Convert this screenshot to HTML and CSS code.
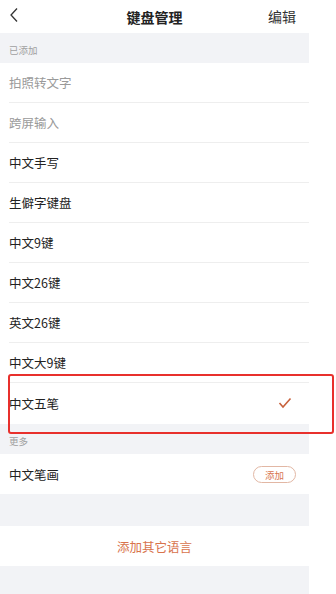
FILE: index.html
```html
<!DOCTYPE html>
<html>
<head>
<meta charset="utf-8">
<link rel="stylesheet" href="styles.css">
</head>
<body>
<div class="screen">
  <div class="header">
    <svg class="back" width="10" height="16" viewBox="0 0 10 16"><path d="M8 1.5 L2 8 L8 14.5" fill="none" stroke="#333" stroke-width="1.3"/></svg>
    <div class="title">键盘管理</div>
    <div class="edit">编辑</div>
  </div>
  <div class="section">已添加</div>
  <div class="list">
    <div class="row dim">拍照转文字</div>
    <div class="row dim">跨屏输入</div>
    <div class="row">中文手写</div>
    <div class="row">生僻字键盘</div>
    <div class="row">中文9键</div>
    <div class="row">中文26键</div>
    <div class="row">英文26键</div>
    <div class="row">中文大9键</div>
    <div class="row last sel">中文五笔
      <svg class="check" width="14" height="12" viewBox="0 0 14 12"><path d="M1.5 6 L5 10 L12.5 1.5" fill="none" stroke="#c8623c" stroke-width="1.6"/></svg>
    </div>
  </div>
  <div class="section">更多</div>
  <div class="list">
    <div class="row last">中文笔画<span class="add">添加</span></div>
  </div>
  <div class="gap"></div>
  <div class="more">添加其它语言</div>
  <div class="gap tail"></div>
</div>
<div class="highlight"></div>
</body>
</html>
```
FILE: styles.css
```css
html, body { margin: 0; padding: 0; background: #fff; }
body {
  width: 336px; height: 594px; overflow: hidden; position: relative;
  font-family: "Noto Sans CJK SC", "Liberation Sans", sans-serif;
}
.screen { width: 309px; }
.header {
  height: 33px; display: flex; align-items: center; position: relative;
}
.back { position: absolute; left: 9px; top: 7px; }
.title {
  flex: 1; text-align: center; font-size: 14px; font-weight: bold; color: #222;
}
.edit { position: absolute; right: 13px; top: 6px; font-size: 14px; color: #333; }
.section {
  height: 30px; background: #f2f3f6; color: #a0a0a0; font-size: 9.5px;
  display: flex; align-items: flex-end; padding: 0 0 6px 9px; box-sizing: border-box;
}
.list { background: #fff; }
.row {
  height: 40px; margin-left: 9px; border-bottom: 1px solid #eeeeee; box-sizing: border-box;
  display: flex; align-items: center; font-size: 12.5px; color: #222; position: relative;
}
.row.dim { color: #9a9a9a; }
.row.last { border-bottom: none; }
.row.sel { height: 41px; }
.check { position: absolute; right: 17px; top: 14px; }
.add {
  position: absolute; right: 13px; top: 12px; width: 43px; height: 17px; box-sizing: border-box;
  border: 1px solid #e2b7a4; border-radius: 9px; color: #d8754f; font-size: 9.5px;
  display: flex; align-items: center; justify-content: center;
}
.gap { height: 32px; background: #f2f3f6; }
.gap.tail { height: 28px; }
.more {
  height: 40px; display: flex; align-items: center; justify-content: center;
  color: #d8734c; font-size: 12.5px;
}
.highlight {
  position: absolute; left: 8px; top: 374px; width: 326px; height: 60px; box-sizing: border-box;
  border: 2px solid #e8302c; border-radius: 3px;
}
```
